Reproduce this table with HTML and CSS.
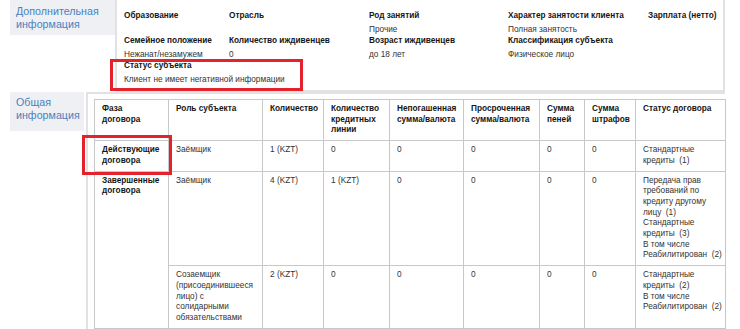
FILE: index.html
```html
<!DOCTYPE html>
<html lang="ru">
<head>
<meta charset="utf-8">
<title>Информация о субъекте</title>
<link rel="stylesheet" href="styles.css">
</head>
<body>
<div class="page">
  <section class="sec sec-extra">
    <div class="sec-label label-extra">Дополнительная информация</div>
    <div class="sec-body body-extra">
      <div class="info-grid">
        <div class="item"><div class="k">Образование</div><div class="v"></div></div>
        <div class="item"><div class="k">Отрасль</div><div class="v"></div></div>
        <div class="item"><div class="k">Род занятий</div><div class="v">Прочие</div></div>
        <div class="item"><div class="k">Характер занятости клиента</div><div class="v">Полная занятость</div></div>
        <div class="item"><div class="k">Зарплата (нетто)</div><div class="v"></div></div>

        <div class="item"><div class="k">Семейное положение</div><div class="v">Нежанат/незамужем</div></div>
        <div class="item"><div class="k">Количество иждивенцев</div><div class="v">0</div></div>
        <div class="item"><div class="k">Возраст иждивенцев</div><div class="v">до 18 лет</div></div>
        <div class="item"><div class="k">Классификация субъекта</div><div class="v">Физическое лицо</div></div>
        <div class="item"></div>

        <div class="item item-wide"><div class="k">Статус субъекта</div><div class="v">Клиент не имеет негативной информации</div></div>
      </div>
    </div>
  </section>

  <section class="sec sec-general">
    <div class="sec-label label-general">Общая информация</div>
    <div class="sec-body body-general">
      <table class="deals">
        <colgroup>
          <col class="c-phase"><col class="c-role"><col class="c-qty"><col class="c-lines">
          <col class="c-debt"><col class="c-overdue"><col class="c-fine"><col class="c-penalty"><col class="c-status">
        </colgroup>
        <thead>
          <tr>
            <th>Фаза<br>договора</th>
            <th>Роль субъекта</th>
            <th>Количество</th>
            <th>Количество<br>кредитных<br>линии</th>
            <th>Непогашенная<br>сумма/валюта</th>
            <th>Просроченная<br>сумма/валюта</th>
            <th>Сумма<br>пеней</th>
            <th>Сумма<br>штрафов</th>
            <th>Статус договора</th>
          </tr>
        </thead>
        <tbody>
          <tr>
            <th>Действующие<br>договора</th>
            <td>Заёмщик</td>
            <td>1 (KZT)</td>
            <td>0</td>
            <td>0</td>
            <td>0</td>
            <td>0</td>
            <td>0</td>
            <td>Стандартные<br>кредиты&nbsp; (1)</td>
          </tr>
          <tr>
            <th rowspan="2">Завершенные<br>договора</th>
            <td>Заёмщик</td>
            <td>4 (KZT)</td>
            <td>1 (KZT)</td>
            <td>0</td>
            <td>0</td>
            <td>0</td>
            <td>0</td>
            <td>Передача прав<br>требований по<br>кредиту другому<br>лицу&nbsp; (1)<br>Стандартные<br>кредиты&nbsp; (3)<br>В том числе<br>Реабилитирован&nbsp; (2)</td>
          </tr>
          <tr>
            <td>Созаемщик<br>(присоединившееся<br>лицо) с<br>солидарными<br>обязательствами</td>
            <td>2 (KZT)</td>
            <td>0</td>
            <td>0</td>
            <td>0</td>
            <td>0</td>
            <td>0</td>
            <td>Стандартные<br>кредиты&nbsp; (2)<br>В том числе<br>Реабилитирован&nbsp; (2)</td>
          </tr>
        </tbody>
      </table>
    </div>
  </section>

  <div class="highlight hl-status"></div>
  <div class="highlight hl-phase"></div>
</div>
</body>
</html>
```

FILE: styles.css
```css
* { box-sizing: border-box; }

html, body {
  margin: 0;
  padding: 0;
  background: #ffffff;
}

body {
  font-family: "Liberation Sans", Arial, Helvetica, sans-serif;
  font-size: 8.25px;
  line-height: 10.7px;
  color: #333333;
}

.page {
  position: relative;
  width: 740px;
  height: 329px;
  padding-left: 10px;
  overflow: hidden;
}

.sec {
  display: grid;
  align-items: start;
}

.sec-extra {
  grid-template-columns: 105px 610px;
}

.sec-general {
  grid-template-columns: 74px 639px;
  column-gap: 2px;
}

.sec-label {
  background: #eef0f4;
  color: #4b80bf;
  font-size: 10.7px;
  line-height: 13.3px;
  padding: 5px 6px 3px 6px;
}

.label-general {
  padding: 4px 6px 8px 6px;
}

.body-extra {
  border-left: 2px solid #e2e2e2;
  border-right: 2px solid #e2e2e2;
  border-bottom: 2px solid #e2e2e2;
  padding: 9.5px 8px 5.5px 7px;
  line-height: 11px;
}

.info-grid {
  display: grid;
  grid-template-columns: 105px 140px 139px 140px 1fr;
}

.item .k {
  font-weight: bold;
  color: #161616;
  white-space: nowrap;
  margin-bottom: 3px;
}

.item .v {
  min-height: 11px;
  white-space: nowrap;
  color: #333333;
}

.item-wide {
  grid-column: span 3;
}

.body-general {
  border-left: 2px solid #e2e2e2;
  border-top: 2px solid #e2e2e2;
  padding: 5px 0 0 6px;
  height: 237px;
}

.deals {
  border-collapse: collapse;
  table-layout: fixed;
  width: 631px;
}

.c-phase { width: 74px; }
.c-role { width: 94px; }
.c-qty { width: 61px; }
.c-lines { width: 66px; }
.c-debt { width: 74px; }
.c-overdue { width: 76px; }
.c-fine { width: 45px; }
.c-penalty { width: 51px; }
.c-status { width: 90px; }

.deals th,
.deals td {
  border: 1px solid #c8c8c8;
  padding: 4px 6px 4px 7px;
  text-align: left;
  vertical-align: top;
  white-space: nowrap;
}

.deals th {
  font-weight: bold;
  color: #161616;
}

.deals td {
  color: #333333;
}

.highlight {
  position: absolute;
  border: 3px solid #e4222c;
  pointer-events: none;
}

.hl-status {
  left: 110px;
  top: 59px;
  width: 193px;
  height: 32px;
}

.hl-phase {
  left: 82px;
  top: 135px;
  width: 90px;
  height: 40px;
}
```
